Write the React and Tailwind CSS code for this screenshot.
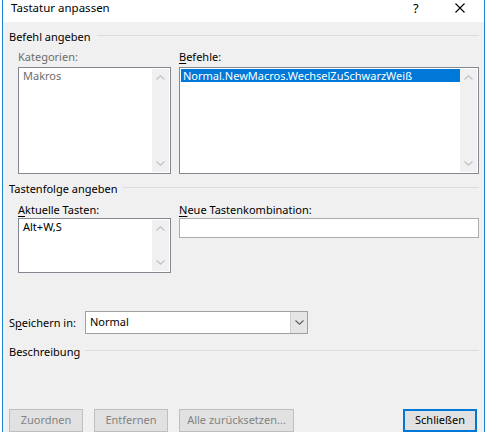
import React from 'react'

const font = { fontFamily: '"Noto Sans", "Open Sans", sans-serif' }

function Chevron({ up, className = '' }) {
  return (
    <svg width="9" height="5" viewBox="0 0 9 5" className={className}>
      <path
        d={up ? 'M0.5 4.5 L4.5 0.8 L8.5 4.5' : 'M0.5 0.5 L4.5 4.2 L8.5 0.5'}
        fill="none"
        stroke="currentColor"
        strokeWidth="1.2"
      />
    </svg>
  )
}

function ListBox({ height, children }) {
  return (
    <div className={`flex border border-[#828790] bg-white p-px ${height}`}>
      <div className="flex-1 min-w-0">{children}</div>
      <div className="w-[17px] bg-[#f0f0f0] flex flex-col items-center justify-between py-[6px] text-[#c2c2c2]">
        <Chevron up />
        <Chevron />
      </div>
    </div>
  )
}

function GroupHeader({ title }) {
  return (
    <div className="flex h-[16px] items-center pl-[6px] pr-[5px]">
      <span className="leading-[16px] whitespace-nowrap">{title}</span>
      <div className="flex-1 h-px bg-[#dcdcdc] ml-[6px] -mt-[3px]" />
    </div>
  )
}

function Button({ children, primary, width }) {
  return (
    <div
      className={`h-[23px] flex items-center justify-center ${width} ${
        primary
          ? 'border-2 border-[#0078d7] bg-[#e1e1e1] text-black'
          : 'border border-[#bfbfbf] bg-[#e1e1e1] text-[#838383]'
      }`}
    >
      {children}
    </div>
  )
}

export default function App() {
  return (
    <div className="w-[487px] h-[432px] bg-white flex overflow-hidden text-[11px] text-black" style={font}>
      <div className="ml-[2px] w-[483px] h-full border-x border-[#1883d7] flex flex-col">
        {/* title bar */}
        <div className="h-[22px] bg-white flex items-start pt-[0px] pl-[8px] shrink-0">
          <span className="flex-1 leading-[16px] text-[11.5px]">Tastatur anpassen</span>
          <span className="w-[10px] leading-[16px] text-[13px] mr-[32px]">?</span>
          <svg width="10" height="10" viewBox="0 0 10 10" className="mr-[19px] mt-[3px]">
            <path d="M0.5 0.5 L9.5 9.5 M9.5 0.5 L0.5 9.5" stroke="#000" strokeWidth="1.1" />
          </svg>
        </div>

        {/* body */}
        <div className="flex-1 bg-[#f0f0f0] flex flex-col">
          <div className="mt-[7px]">
            <GroupHeader title="Befehl angeben" />
          </div>

          <div className="flex mt-[4px] pl-[15px] pr-[5px] gap-[8px]">
            <div className="w-[153px] flex flex-col">
              <div className="h-[16px] leading-[16px] text-[#6d6d6d]">Kategorien:</div>
              <div className="mt-[2px]">
                <ListBox height="h-[107px]">
                  <div className="pl-[3px] leading-[14px] text-[#6d6d6d]">Makros</div>
                </ListBox>
              </div>
            </div>
            <div className="flex-1 flex flex-col">
              <div className="h-[16px] leading-[16px]">
                <u className="underline-offset-2">B</u>efehle:
              </div>
              <div className="mt-[2px]">
                <ListBox height="h-[107px]">
                  <div className="bg-[#0078d7] text-white leading-[13px] h-[13px] pl-[2px] whitespace-nowrap">
                    Normal.NewMacros.WechselZuSchwarzWeiß
                  </div>
                </ListBox>
              </div>
            </div>
          </div>

          <div className="mt-[7px]">
            <GroupHeader title="Tastenfolge angeben" />
          </div>

          <div className="flex mt-[5px] pl-[15px] pr-[5px] gap-[8px]">
            <div className="w-[153px] flex flex-col">
              <div className="h-[16px] leading-[16px]">
                <u className="underline-offset-2">A</u>ktuelle Tasten:
              </div>
              <ListBox height="h-[55px]">
                <div className="pl-[3px] leading-[14px]">Alt+W,S</div>
              </ListBox>
            </div>
            <div className="flex-1 flex flex-col">
              <div className="h-[16px] leading-[16px]">
                <u className="underline-offset-2">N</u>eue Tastenkombination:
              </div>
              <div className="h-[20px] border border-[#adadad] bg-white" />
            </div>
          </div>

          <div className="flex items-center mt-[38px] pl-[6px]">
            <span className="w-[76px] leading-[16px]">
              S<u className="underline-offset-2">p</u>eichern in:
            </span>
            <div className="w-[223px] h-[23px] border border-[#a0a0a0] bg-white flex">
              <div className="flex-1 pl-[4px] flex items-center">Normal</div>
              <div className="w-[17px] bg-[#e5e5e5] border-l border-[#cfcfcf] flex items-center justify-center text-[#606060]">
                <Chevron />
              </div>
            </div>
          </div>

          <div className="mt-[10px] flex h-[16px] items-center pl-[6px] pr-[5px]">
            <span className="w-[76px] leading-[16px]">Beschreibung</span>
            <div className="flex-1 h-px bg-[#dcdcdc] -mt-[3px]" />
          </div>

          <div className="mt-[49px] flex pl-[6px] pr-[7px]">
            <div className="flex gap-[11px]">
              <Button width="w-[74px]">Zuordnen</Button>
              <Button width="w-[74px]">Entfernen</Button>
              <Button width="w-[115px]">Alle zurücksetzen...</Button>
            </div>
            <div className="flex-1" />
            <Button primary width="w-[74px]">Schließen</Button>
          </div>
        </div>
      </div>
    </div>
  )
}
